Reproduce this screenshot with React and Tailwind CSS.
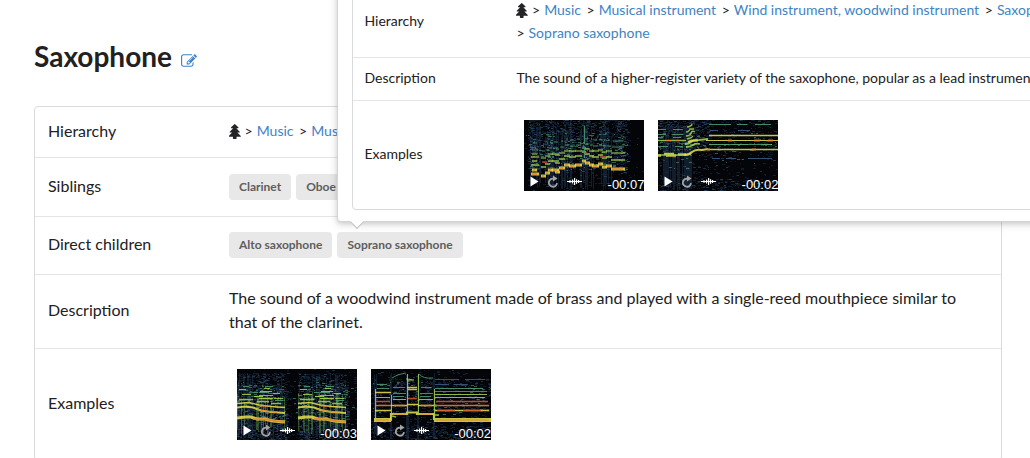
import React from "react";

const HOT = "#ea7f2c";
const SUN = "#e3dc4c";
const LIME = "#a3cf4e";
const TEAL = "#4f9a72";
const NAVY = "#3a5a80";

function random(seed) {
  let s = seed;
  return () => {
    s = (s * 1664525 + 1013904223) % 4294967296;
    return s / 4294967296;
  };
}

// Short horizontal dashes, scattered where `density(x, y)` allows them.
function speckle(seed, tries, density) {
  const next = random(seed);
  let d = "";
  for (let i = 0; i < tries; i++) {
    const x = Math.floor(next() * 120);
    const y = Math.floor(next() * 71);
    const w = 1 + Math.floor(next() * 3);
    if (next() < density(x, y)) d += `M${x} ${y}h${w}v1h-${w}z`;
  }
  return d;
}

// Thin vertical streaks in a range of columns.
function streaks(seed, count, ranges, top, bottom) {
  const next = random(seed);
  let d = "";
  for (let i = 0; i < count; i++) {
    const [a, b] = ranges[Math.floor(next() * ranges.length)];
    const x = Math.floor(a + next() * (b - a));
    const y = Math.floor(top + next() * 20);
    d += `M${x} ${y}V${Math.floor(bottom - next() * 8)}h1V${y}z`;
  }
  return d;
}

const scaleNotes = [
  [7, 15, 54], [8, 13, 50], [17, 22, 56], [21, 26, 53], [24, 29, 50], [28, 35, 50], [31, 36, 52],
  [35, 41, 48], [40, 46, 45], [45, 52, 46], [51, 58, 45], [58, 62, 41], [61, 66, 43], [65, 70, 45],
  [68, 75, 46], [74, 79, 44], [78, 83, 47], [82, 88, 46], [87, 101, 49],
];

const saxPhrase = (o) => [
  { p: `M${o} 49l8-1l6 0l6 2l8 0l8 2l12 1`, c: SUN, w: 3 },
  { p: `M${o + 16} 50l14 0.5l8 1.5l10 0.8`, c: HOT, w: 1.8 },
  { p: `M${o} 38.5l8-1l8 1l8 3l10 1.4l14 1`, c: SUN, w: 2 },
  { p: `M${o + 20} 40.5l10 1.8l10 0.8`, c: HOT, w: 1.2 },
  { p: `M${o} 34.5l12-1l10 2.5l12 1.5l14 1`, c: SUN, w: 1.5 },
  { p: `M${o + 23} 37h8`, c: HOT, w: 1.2 },
  { p: `M${o + 2} 30.5h14m4 2h12m-10 -3h14m-2 5h10`, c: LIME, w: 1.3 },
  { p: `M${o + 5} 25.5h9m8 1h14m-14 3h13m-18 -2h6m14 2h9`, c: LIME, w: 1.2 },
  { p: `M${o + 2} 20.5h7m14 2h12m-8 -3h6m-16 8h9m10 -3h7`, c: LIME, w: 1 },
  { p: `M${o + 6} 17.5h6m16 0h8m-14 6h10m6 8h8m-30 -8h5`, c: TEAL, w: 1 },
];

const SPECTRA = {
  scale: {
    seed: 11,
    ranges: [[6, 18], [20, 30], [32, 50], [55, 70], [76, 88]],
    density: (x, y) =>
      x < 4 || x > 104 ? 0.03 : (y < 50 ? 0.75 : 0.15) * (0.15 + 0.85 * Math.abs(Math.sin(x / 5.5))),
    lines: [
      ...scaleNotes.map(([a, b, y]) => ({ p: `M${a} ${y}H${b}`, c: SUN, w: 3 })),
      ...scaleNotes.map(([a, b, y]) => ({ p: `M${a + 1} ${y}H${b - 2}`, c: HOT, w: 1.6 })),
      ...scaleNotes.map(([a, b, y]) => ({ p: `M${a} ${y - 9}H${b}`, c: LIME, w: 1.5 })),
      ...scaleNotes.map(([a, b, y]) => ({ p: `M${a} ${Math.round(y * 0.68)}H${b}`, c: LIME, w: 1.2 })),
      ...scaleNotes.map(([a, b, y]) => ({ p: `M${a + 1} ${Math.round(y * 0.56)}H${b - 1}`, c: TEAL, w: 1 })),
      ...scaleNotes.map(([a, b, y]) => ({ p: `M${a + 2} ${Math.round(y * 0.43)}H${b - 2}`, c: TEAL, w: 1 })),
      { p: "M76 37h6M60 33h3M18 42h5", c: "#d8432c", w: 1.5 },
      { p: "M60.5 28v10M60.5 6v18", c: TEAL, w: 1 },
    ],
  },
  held: {
    seed: 23,
    ranges: [[0, 30], [26, 34]],
    density: (x, y) => (y < 32 ? (x < 52 ? 0.5 : 0.15) : y > 58 ? 0.3 : 0.08),
    lines: [
      { p: "M0 35.5h3m3 -1.5h10m-8 1.5h10m2 -1h8", c: SUN, w: 2.4 },
      { p: "M0 35h28l5 -1", c: LIME, w: 1.5 },
      { p: "M26 35q5 0 8-3t10-2l6-1", c: SUN, w: 2 },
      { p: "M27 24q4 0 6-2t8-2l9-1M28 27q4 0 7-2t7-1", c: LIME, w: 1.8 },
      { p: "M30 22l4-1.5l6 0", c: SUN, w: 2.2 },
      { p: "M28 16q4 0 5-3t4-1M28 12q3 0 4-3h4M29 7q4 0 5-3M29 19q5-1 6-3", c: LIME, w: 1.4 },
      { p: "M0 20.5h28", c: LIME, w: 1.3 },
      { p: "M8 20.5h5m4 0h4", c: HOT, w: 1.2 },
      { p: "M0 26.5h10m7 0h8M0 14.5h8m7 0h10M0 9.5h8m7 0h10M0 17.5h5m10 0h8", c: TEAL, w: 1 },
      { p: "M50 29.5H120M51 15.5H120", c: SUN, w: 1.3 },
      { p: "M48 20.5H120", c: SUN, w: 1.2 },
      { p: "M49 29.5h3M70 20.5h4m22 0h6m8 0h5M94 29.5h4", c: HOT, w: 2 },
      { p: "M51 24.5h20m3 0h16m14 0h10", c: LIME, w: 1 },
      { p: "M51 24.5h62M51 4.5h22m6 0h10m8 0h16", c: TEAL, w: 1 },
      { p: "M52 10.5h8m20 0h12M54 38.5h8m6 0h10m12 0h24", c: NAVY, w: 1 },
    ],
  },
  phrases: {
    seed: 37,
    ranges: [[0, 48], [61, 109]],
    tall: true,
    density: (x, y) => {
      if (y < 4) return 0.02;
      const gap = (x > 49 && x < 61) || x > 110;
      return gap ? 0.08 : y < 16 ? 0.35 : 0.7;
    },
    lines: [...saxPhrase(0), ...saxPhrase(61)],
  },
  steps: {
    seed: 53,
    ranges: [[3, 6], [19, 21], [35, 38], [46, 48], [62, 64]],
    density: (x, y) => (y < 10 ? 0.08 : y < 44 ? 0.25 : y > 56 ? 0.35 : 0.12),
    lines: [
      { p: "M3 51H20M63 51H120", c: SUN, w: 4 },
      { p: "M5 51H18M65 51H118", c: HOT, w: 1.2 },
      { p: "M20 51V45H36V43.5H46V45H63V51", c: SUN, w: 2.2 },
      { p: "M22 45H35M49 45H61", c: HOT, w: 1 },
      { p: "M20.5 52V26M36.5 44V5M47.5 46V5M63.5 52V20M4.5 50V20", c: LIME, w: 1 },
      { p: "M4 41.5H20M64 41.5H118M20 36.5H36M36 35.5H47M47 36.5H63", c: SUN, w: 1.6 },
      { p: "M5 36.5H20M64 36.5H118M23 36.5H34M50 36.5H61", c: HOT, w: 1.5 },
      { p: "M5 32.5H19M65 32.5H117M37 29.5H46M66 41.5H84M92 41.5H110", c: "#d4582e", w: 1.4 },
      { p: "M4 23.5H20M36 18.5H46M37 20.5H46", c: SUN, w: 1.3 },
      { p: "M5 28.5H19M64 25.5H116M64 28.5H114M22 30.5H35M48 30.5H62", c: LIME, w: 1.2 },
      { p: "M6 19.5H18M64 22.5H116M64 19.5H112M22 24.5H35M49 24.5H62M49 27.5H60M22 27.5H33", c: TEAL, w: 1.1 },
      { p: "M36 10l7 1l-6 1z", c: LIME, w: 1.2 },
      { p: "M21 9q5-4 14-5M6 15.5H16M48 5q4 5 14 4M22 18.5h12M50 18.5h10", c: TEAL, w: 1 },
      { p: "M64 10.5h24m6 0h20M64 15.5h14m5 0h14", c: NAVY, w: 1 },
      { p: "M21 47l4 1M64 46l4 0", c: LIME, w: 1.4 },
    ],
  },
};

function Spectrogram({ kind }) {
  const s = SPECTRA[kind];
  return (
    <svg viewBox="0 0 120 71" className="block h-full w-full" aria-hidden="true">
      <rect width="120" height="71" fill="#030509" />
      <path d={streaks(s.seed + 5, 50, s.ranges, 4, 71)} fill="#35557a" opacity="0.3" />
      <path d={speckle(s.seed, 4200, s.density)} fill="#1a2c42" opacity="0.6" />
      <path d={speckle(s.seed + 1, 1100, s.density)} fill={NAVY} opacity="0.5" />
      <path
        d={speckle(s.seed + 2, 650, (x, y) => (y > 12 && y < 52 ? s.density(x, y) : 0))}
        fill={TEAL}
        opacity="0.6"
      />
      {s.tall && <path d={streaks(s.seed + 9, 36, s.ranges, 22, 66)} fill="#6fae4c" opacity="0.4" />}
      {s.lines.map((l, i) => (
        <path key={i} d={l.p} fill="none" stroke={l.c} strokeWidth={l.w} opacity="0.88" />
      ))}
    </svg>
  );
}

function Thumbnail({ kind, time }) {
  return (
    <div className="relative h-[71px] w-[120px] overflow-hidden bg-black">
      <Spectrogram kind={kind} />
      <div className="absolute inset-x-0 bottom-0 flex h-[17px] items-center justify-between pl-[6px]">
        <div className="flex items-center gap-2 pb-[3px]">
          <button type="button" aria-label="Play" className="block">
            <svg viewBox="0 0 9 11" className="block h-[11px] w-[9px]">
              <path d="M0.5 0.5v10l8-5z" fill="#fff" />
            </svg>
          </button>
          <button type="button" aria-label="Loop" className="block">
            <svg viewBox="0 0 12 13" className="block h-[13px] w-3">
              <path d="M6.6 3.6A4.1 4.1 0 1 0 10 8.2" fill="none" stroke="#a4a4a4" strokeWidth="1.8" />
              <path d="M6 0.6l4.6 3L6 6.6z" fill="#a4a4a4" />
            </svg>
          </button>
          <button type="button" aria-label="Waveform" className="block">
            <svg viewBox="0 0 15 7" className="block h-[7px] w-[15px]">
              <path
                d="M0 3h15v1H0zM2 2.4h2v2.2H2zM5 1.6h1.2v3.8H5zM7 0h1.2v7H7zM9 1.2h1.2v4.6H9zM11 2h1.2v3H11z"
                fill="#fff"
              />
            </svg>
          </button>
        </div>
        <span className="pt-[5px] font-['Liberation_Sans',Arial,sans-serif] text-[13px] leading-[14px] text-white">
          {time}
        </span>
      </div>
    </div>
  );
}

function TreeIcon() {
  return (
    <svg viewBox="192 0 1408 1792" className="inline-block h-[15px] w-3 align-[-3px]" fill="#222426" aria-hidden="true">
      <path d="M1600 1472q0 26-19 45t-45 19h-462q1 17 6 87.5t5 108.5q0 25-18 42.5t-43 17.5h-320q-25 0-43-17.5t-18-42.5q0-38 5-108.5t6-87.5h-462q-26 0-45-19t-19-45 19-45l402-403h-229q-26 0-45-19t-19-45 19-45l402-403h-197q-26 0-45-19t-19-45 19-45l384-384q19-19 45-19t45 19l384 384q19 19 19 45t-19 45-45 19h-197l402 403q19 19 19 45t-19 45-45 19h-229l402 403q19 19 19 45z" />
    </svg>
  );
}

function EditIcon() {
  return (
    <svg viewBox="0 128 1792 1408" className="block h-[13px] w-4" fill="currentColor" aria-hidden="true">
      <path d="M888 1184l116-116-152-152-116 116v56h96v96h56zm440-720q-16-16-33 1l-350 350q-17 17-1 33t33-1l350-350q17-17 1-33zm80 594v190q0 119-84.5 203.5t-203.5 84.5h-832q-119 0-203.5-84.5t-84.5-203.5v-832q0-119 84.5-203.5t203.5-84.5h832q63 0 117 25 15 7 18 23 3 17-9 29l-49 49q-14 14-32 8-23-6-45-6h-832q-66 0-113 47t-47 113v832q0 66 47 113t113 47h832q66 0 113-47t47-113v-126q0-13 9-22l64-64q15-15 35-7t20 29zm-96-738l288 288-672 672h-288v-288zm444 132l-92 92-288-288 92-92q28-28 68-28t68 28l152 152q28 28 28 68t-28 68z" />
    </svg>
  );
}

function Breadcrumb({ items }) {
  return (
    <nav aria-label="Hierarchy" className="text-sm leading-[23px]">
      <TreeIcon />
      {items.map((item) => (
        <React.Fragment key={item}>
          {" "}
          <span className="whitespace-nowrap">
            <span className="mr-1">&gt;</span>
            <a href="#" className="mr-0.5 text-[#4183c4]">{item}</a>
          </span>
        </React.Fragment>
      ))}
    </nav>
  );
}

function Chip({ children }) {
  return (
    <a href="#" className="block rounded bg-[#e8e8e8] px-[10px] py-[7px] text-xs leading-3 font-bold whitespace-nowrap text-[#5e5e5e]">
      {children}
    </a>
  );
}

function Row({ label, small, last, pad, children }) {
  const line = last ? "" : "border-b border-[#e4e5e6]";
  return (
    <tr>
      <th
        scope="row"
        className={
          small
            ? `w-[152px] px-[11px] pb-0.5 text-left align-middle text-sm font-normal ${line}`
            : `w-[181px] px-[13px] pb-[3px] text-left align-middle text-base font-normal ${line}`
        }
      >
        {label}
      </th>
      <td className={`${small ? "px-[11px] text-sm" : "px-[13px] text-base"} ${pad} ${line}`}>{children}</td>
    </tr>
  );
}

const tableClass = "w-full table-fixed border-separate border-spacing-0 rounded border border-[#d9dadb]";

function Popup() {
  return (
    <div
      role="tooltip"
      className="absolute bottom-full left-0 z-10 mb-[10px] w-[775px] rounded border border-[#d4d4d5] bg-white px-[14px] pt-[11px] pb-[11px] shadow-[0_2px_4px_0_rgba(34,36,38,0.12),0_2px_10px_0_rgba(34,36,38,0.15)]"
    >
      <table className={tableClass}>
        <tbody>
          <Row small label="Hierarchy" pad="pt-[11px] pb-[13px]">
            <Breadcrumb items={["Music", "Musical instrument", "Wind instrument, woodwind instrument", "Saxophone", "Soprano saxophone"]} />
          </Row>
          <Row small label="Description" pad="pt-[9px] pb-[11px]">
            <p className="leading-[22px]">
              The sound of a higher-register variety of the saxophone, popular as a lead instrument.
            </p>
          </Row>
          <Row small last label="Examples" pad="pt-[19px] pb-[18px]">
            <div className="flex gap-[14px] pl-2">
              <Thumbnail kind="scale" time="-00:07" />
              <Thumbnail kind="held" time="-00:02" />
            </div>
          </Row>
        </tbody>
      </table>
      <span className="absolute -bottom-[6px] left-[14px] h-[10px] w-[10px] rotate-45 border-r border-b border-[#bebebf] bg-white" />
    </div>
  );
}

export default function App() {
  return (
    <main className="min-h-screen overflow-x-clip bg-white pt-[38px] pr-7 pl-[34px] font-[Lato,sans-serif] text-[#212121]">
      <header className="flex items-center gap-[9px]">
        <h1 className="text-[28px] leading-9 font-bold">Saxophone</h1>
        <a href="#" aria-label="Edit" className="pt-2 text-[#4183c4]">
          <EditIcon />
        </a>
      </header>
      <table className={`mt-8 ${tableClass}`}>
        <tbody>
          <Row label="Hierarchy" pad="pt-3 pb-[15px]">
            <Breadcrumb items={["Music", "Musical instrument", "Wind instrument, woodwind instrument", "Saxophone"]} />
          </Row>
          <Row label="Siblings" pad="py-4">
            <div className="flex gap-[5px]">
              <Chip>Clarinet</Chip>
              <Chip>Oboe</Chip>
            </div>
          </Row>
          <Row label="Direct children" pad="pt-[15px] pb-4">
            <div className="flex gap-[5px]">
              <Chip>Alto saxophone</Chip>
              <div className="relative">
                <Chip>Soprano saxophone</Chip>
                <Popup />
              </div>
            </div>
          </Row>
          <Row label="Description" pad="pt-[11px] pb-[14px]">
            <p className="leading-6">
              The sound of a woodwind instrument made of brass and played with a single-reed mouthpiece similar to that
              of the clarinet.
            </p>
          </Row>
          <Row last label="Examples" pad="py-5">
            <div className="flex gap-[14px] pl-2">
              <Thumbnail kind="phrases" time="-00:03" />
              <Thumbnail kind="steps" time="-00:02" />
            </div>
          </Row>
        </tbody>
      </table>
    </main>
  );
}
